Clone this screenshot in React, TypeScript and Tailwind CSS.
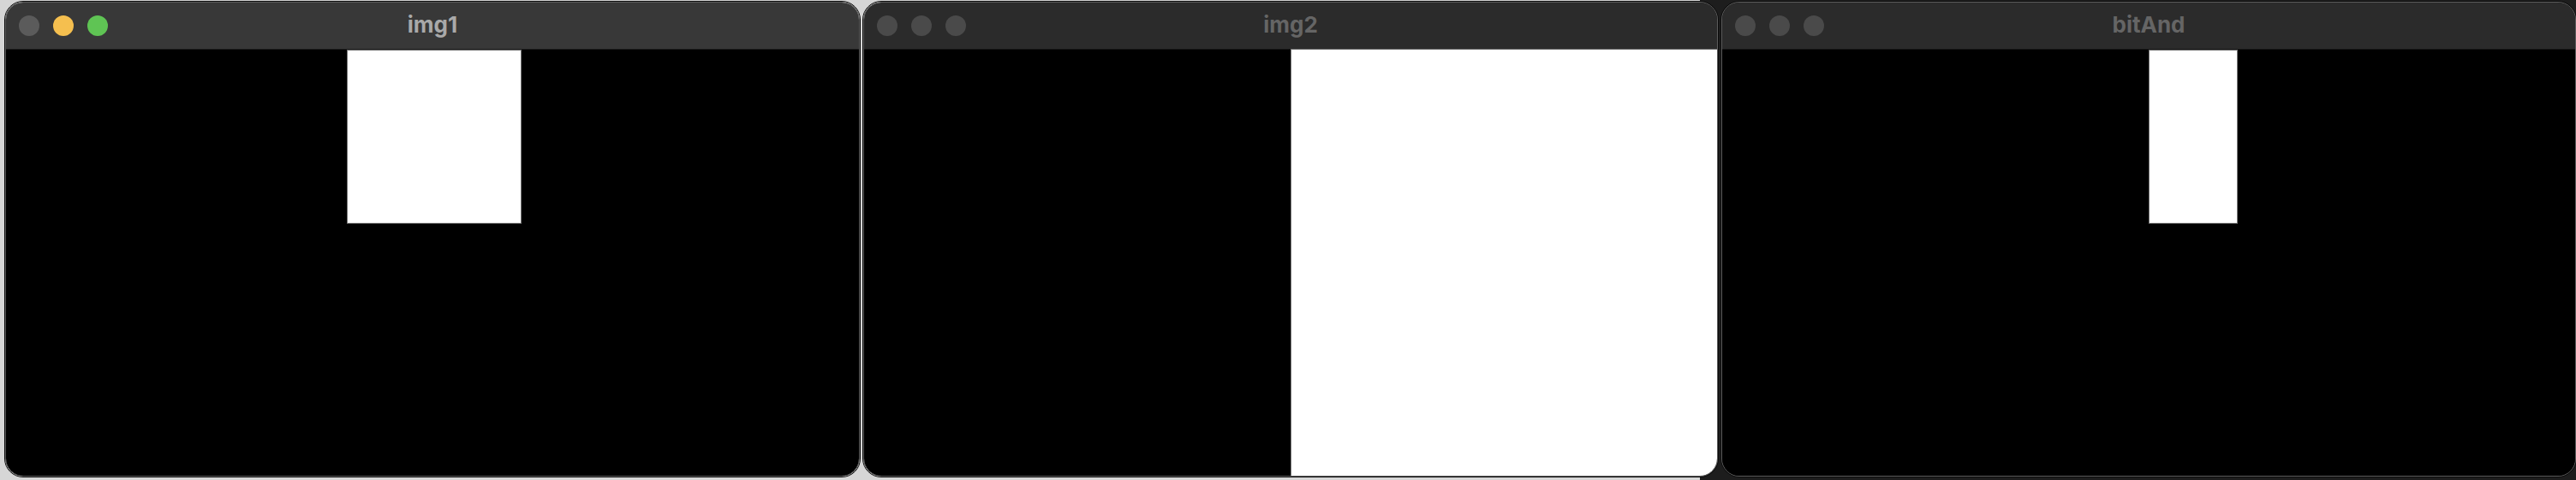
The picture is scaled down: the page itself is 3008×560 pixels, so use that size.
import React from "react";

type Rect = { left: number; top: number; width: number; height: number };

interface WindowProps {
  title: string;
  active?: boolean;
  rect: Rect;
}

// content area is 998 x 497, image is 500x250 drawn at 2x
const Window = ({ title, active = false, rect }: WindowProps) => {
  return (
    <div className="w-[1000px] h-[556px] rounded-[22px] border border-[#0b0b0b] shrink-0">
      <div className="h-full rounded-[21px] border border-[#5c5c5c] overflow-hidden flex flex-col">
        <div
          className={
            active
              ? "h-[55px] shrink-0 grid grid-cols-[1fr_auto_1fr] items-center bg-[#383838] border-b border-[#1a1a1a]"
              : "h-[55px] shrink-0 grid grid-cols-[1fr_auto_1fr] items-center bg-[#2b2b2b] border-b border-[#141414]"
          }
        >
          <div className="flex items-center gap-[16px] pl-[15px]">
            {active ? (
              <>
                <span className="w-[24px] h-[24px] rounded-full bg-[#5b5b5b]" />
                <span className="w-[24px] h-[24px] rounded-full bg-[#f5bf4f]" />
                <span className="w-[24px] h-[24px] rounded-full bg-[#5fc454]" />
              </>
            ) : (
              <>
                <span className="w-[24px] h-[24px] rounded-full bg-[#4a4a4a]" />
                <span className="w-[24px] h-[24px] rounded-full bg-[#4a4a4a]" />
                <span className="w-[24px] h-[24px] rounded-full bg-[#4a4a4a]" />
              </>
            )}
          </div>
          <span
            className={
              active
                ? "font-['Inter','Liberation_Sans',sans-serif] font-bold text-[26px] leading-none text-[#a9a9a9] -mt-[2px]"
                : "font-['Inter','Liberation_Sans',sans-serif] font-bold text-[26px] leading-none text-[#656565] -mt-[2px]"
            }
          >
            {title}
          </span>
          <div />
        </div>
        <div className="flex-1 bg-black flex flex-col">
          <div
            className="bg-white shadow-[0_0_0_1px_#777]"
            style={{
              marginLeft: rect.left,
              marginTop: rect.top,
              width: rect.width,
              height: rect.height,
            }}
          />
        </div>
      </div>
    </div>
  );
};

export default function App() {
  return (
    <div className="w-[3008px] h-[560px] overflow-hidden flex gap-[2px] pl-[5px] pt-[1px] bg-[linear-gradient(to_right,#d6d6d6_0%,#d6d6d6_66%,#1d1d1d_66%,#1d1d1d_100%)]">
      <Window title="img1" active rect={{ left: 399, top: 1, width: 202, height: 201 }} />
      <Window title="img2" rect={{ left: 499, top: 0, width: 499, height: 520 }} />
      <Window title="bitAnd" rect={{ left: 499, top: 1, width: 102, height: 201 }} />
    </div>
  );
}
